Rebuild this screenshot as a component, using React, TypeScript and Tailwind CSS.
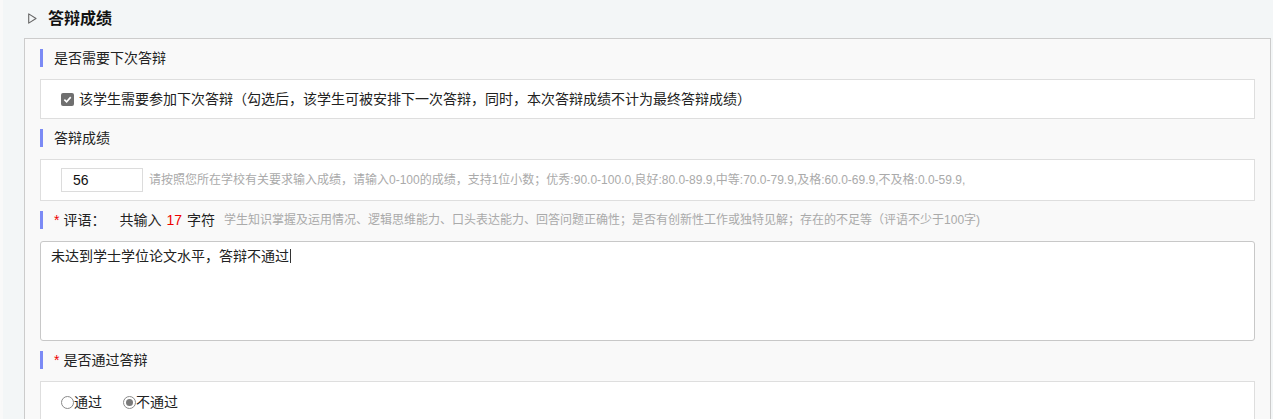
import React from "react";

const font = { fontFamily: '"Microsoft YaHei", "Liberation Sans", "Noto Sans CJK SC", sans-serif' };

function Heading({ children }: { children: React.ReactNode }) {
  return (
    <div className="mt-[10px] mb-[12px] flex h-[18px] items-center border-l-[3px] border-[#7b8af5] pl-[11px] text-[14px] leading-[18px] text-[#222]">
      {children}
    </div>
  );
}

function Star() {
  return <span className="mr-[4px] text-[14px] text-[#e00]">*</span>;
}

export default function App() {
  return (
    <div className="flex h-[419px] w-[1273px] overflow-hidden bg-[#f3f6f7]" style={font}>
      <div className="w-[3px] shrink-0 bg-[#f9f9f9]" />
      <div className="flex min-w-0 flex-1 flex-col">
        <div className="flex h-[38px] shrink-0 items-center pl-[25px]">
          <svg width="9" height="11" viewBox="0 0 9 11" className="-mt-[1px]">
            <path d="M0.7 0.9 L8 5.5 L0.7 10.1 Z" fill="none" stroke="#666" strokeWidth="1.1" strokeLinejoin="round" />
          </svg>
          <span className="ml-[11px] text-[16px] font-bold text-[#111]">答辩成绩</span>
        </div>
        <div className="ml-[21px] mr-[2px] shrink-0 border border-[#cccccc] bg-[#f9f9f9] pl-[15px] pr-[15px] pb-4">
          <Heading>是否需要下次答辩</Heading>
          <div className="flex h-[40px] items-center border border-[#dedede] bg-white pl-[20px] text-[14px] text-[#222]">
            <span className="flex h-[13px] w-[13px] items-center justify-center rounded-[2px] bg-[#6f6f6f]">
              <svg width="9" height="9" viewBox="0 0 10 10">
                <path d="M1.5 5.2 L4 7.6 L8.6 2.4" fill="none" stroke="#fff" strokeWidth="1.8" />
              </svg>
            </span>
            <span className="ml-[5px]">该学生需要参加下次答辩（勾选后，该学生可被安排下一次答辩，同时，本次答辩成绩不计为最终答辩成绩）</span>
          </div>

          <Heading>答辩成绩</Heading>
          <div className="flex h-[42px] items-center border border-[#dedede] bg-white pl-[20px]">
            <div className="flex h-[24px] w-[82px] items-center border border-[#dcdcdc] pl-[11px] text-[14px] text-[#111]">56</div>
            <span className="ml-[6px] text-[12px] text-[#aaa]">
              请按照您所在学校有关要求输入成绩，请输入0-100的成绩，支持1位小数；优秀:90.0-100.0,良好:80.0-89.9,中等:70.0-79.9,及格:60.0-69.9,不及格:0.0-59.9,
            </span>
          </div>

          <div className="mt-[10px] mb-[12px] flex h-[18px] items-center border-l-[3px] border-[#7b8af5] pl-[11px] text-[14px] text-[#222]">
            <Star />
            <span>评语：</span>
            <span className="ml-[14px]">共输入</span>
            <span className="ml-[5px] text-[14px] text-[#e00]">17</span>
            <span className="ml-[5px]">字符</span>
            <span className="ml-[9px] text-[12px] text-[#aaa]">学生知识掌握及运用情况、逻辑思维能力、口头表达能力、回答问题正确性；是否有创新性工作或独特见解；存在的不足等（评语不少于100字)</span>
          </div>
          <div className="h-[100px] rounded-[3px] border border-[#c8c8c8] bg-white pl-[10px] pt-[3px] text-[14px] leading-[22px] text-[#222]">
            未达到学士学位论文水平，答辩不通过<span className="ml-[1px] inline-block h-[14px] w-px translate-y-[2px] bg-[#333]" />
          </div>

          <Heading>
            <Star />
            是否通过答辩
          </Heading>
          <div className="flex h-[42px] items-center border border-[#dedede] bg-white pl-[20px] text-[14px] text-[#222]">
            <span className="h-[13px] w-[13px] rounded-full border border-[#8a8a8a] bg-white" />
            <span>通过</span>
            <span className="ml-[21px] flex h-[13px] w-[13px] items-center justify-center rounded-full border border-[#8a8a8a] bg-white">
              <span className="h-[7px] w-[7px] rounded-full bg-[#7a7a7a]" />
            </span>
            <span>不通过</span>
          </div>
        </div>
      </div>
    </div>
  );
}
